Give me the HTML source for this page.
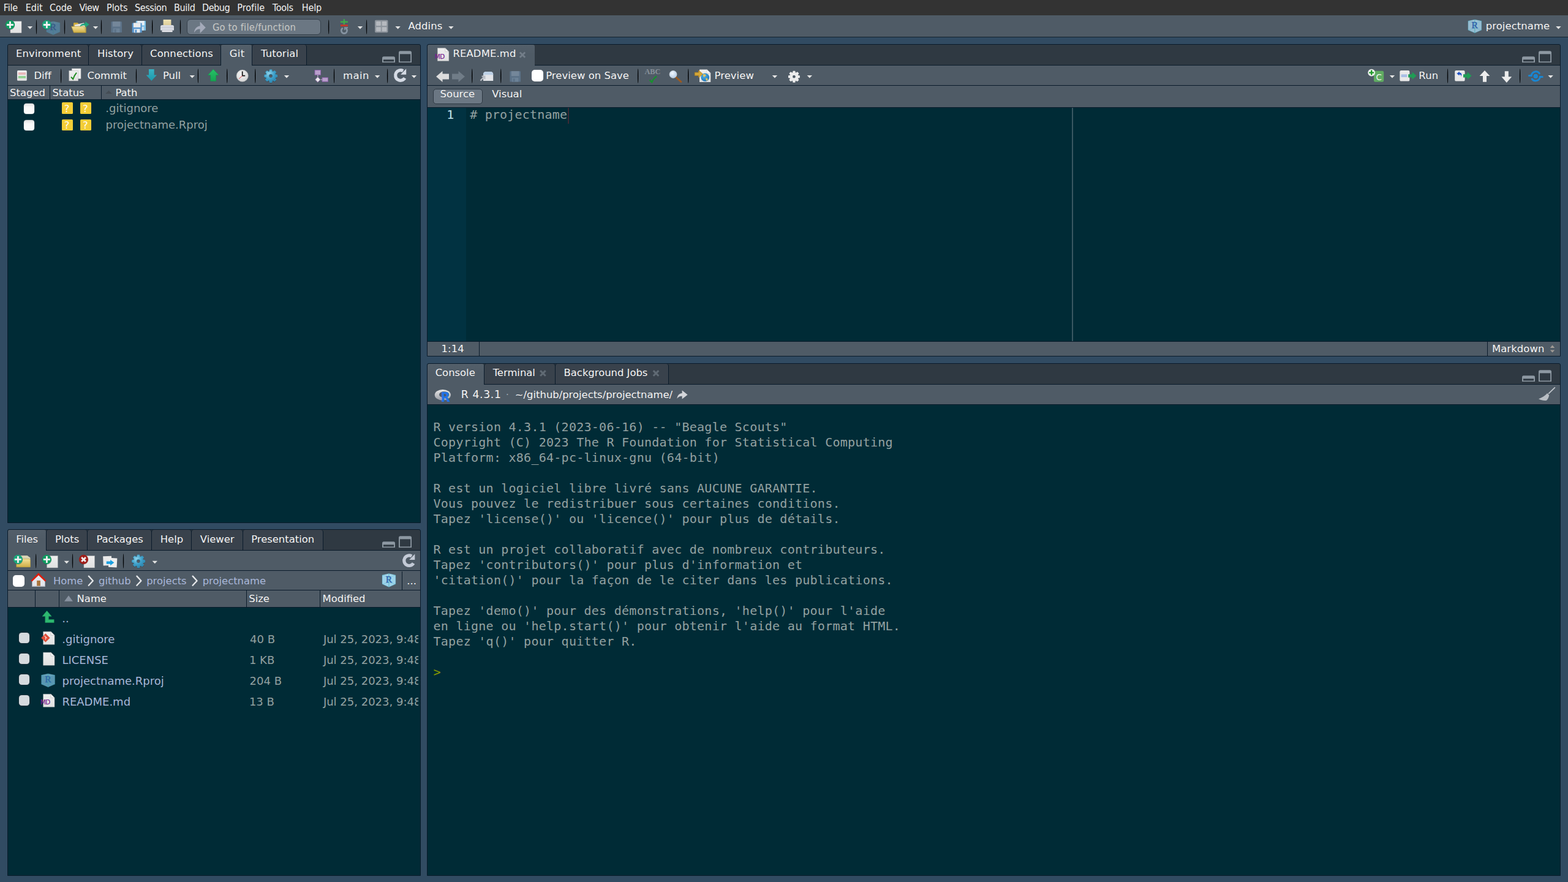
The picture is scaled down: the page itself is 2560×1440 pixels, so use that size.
<!DOCTYPE html>
<html lang="en"><head><meta charset="utf-8"><title>RStudio - projectname</title>
<style>
html,body{margin:0;padding:0;background:#314b62;}
body{width:2560px;height:1440px;overflow:hidden;font-family:"DejaVu Sans","Liberation Sans",sans-serif;}
#app{position:relative;width:2560px;height:1440px;overflow:hidden;background:#314b62;}
#app div,#app span,#app svg{position:absolute;box-sizing:border-box;}
#app svg{overflow:visible;}
.t{white-space:pre;line-height:24px;height:24px;}
.sh{text-shadow:0 1px 0 rgba(0,0,0,.22);}

</style></head>
<body>
<div id="app">
<div style="left:0px;top:0px;width:2560px;height:25px;background:#333333;"></div>
<span class="t" style="left:5.79px;top:1px;font-size:16px;color:#f2f2f2;font-family:&quot;DejaVu Sans Condensed&quot;,&quot;DejaVu Sans&quot;,sans-serif;font-stretch:condensed;letter-spacing:-0.190px;">File</span>
<span class="t" style="left:41.79px;top:1px;font-size:16px;color:#f2f2f2;font-family:&quot;DejaVu Sans Condensed&quot;,&quot;DejaVu Sans&quot;,sans-serif;font-stretch:condensed;letter-spacing:-0.011px;">Edit</span>
<span class="t" style="left:81.00px;top:1px;font-size:16px;color:#f2f2f2;font-family:&quot;DejaVu Sans Condensed&quot;,&quot;DejaVu Sans&quot;,sans-serif;font-stretch:condensed;letter-spacing:-0.063px;">Code</span>
<span class="t" style="left:129.49px;top:1px;font-size:16px;color:#f2f2f2;font-family:&quot;DejaVu Sans Condensed&quot;,&quot;DejaVu Sans&quot;,sans-serif;font-stretch:condensed;letter-spacing:-0.491px;">View</span>
<span class="t" style="left:173.99px;top:1px;font-size:16px;color:#f2f2f2;font-family:&quot;DejaVu Sans Condensed&quot;,&quot;DejaVu Sans&quot;,sans-serif;font-stretch:condensed;letter-spacing:-0.031px;">Plots</span>
<span class="t" style="left:220.05px;top:1px;font-size:16px;color:#f2f2f2;font-family:&quot;DejaVu Sans Condensed&quot;,&quot;DejaVu Sans&quot;,sans-serif;font-stretch:condensed;letter-spacing:-0.394px;">Session</span>
<span class="t" style="left:283.99px;top:1px;font-size:16px;color:#f2f2f2;font-family:&quot;DejaVu Sans Condensed&quot;,&quot;DejaVu Sans&quot;,sans-serif;font-stretch:condensed;letter-spacing:-0.307px;">Build</span>
<span class="t" style="left:329.99px;top:1px;font-size:16px;color:#f2f2f2;font-family:&quot;DejaVu Sans Condensed&quot;,&quot;DejaVu Sans&quot;,sans-serif;font-stretch:condensed;letter-spacing:-0.410px;">Debug</span>
<span class="t" style="left:387.19px;top:1px;font-size:16px;color:#f2f2f2;font-family:&quot;DejaVu Sans Condensed&quot;,&quot;DejaVu Sans&quot;,sans-serif;font-stretch:condensed;letter-spacing:0.042px;">Profile</span>
<span class="t" style="left:444.84px;top:1px;font-size:16px;color:#f2f2f2;font-family:&quot;DejaVu Sans Condensed&quot;,&quot;DejaVu Sans&quot;,sans-serif;font-stretch:condensed;letter-spacing:-0.261px;">Tools</span>
<span class="t" style="left:492.79px;top:1px;font-size:16px;color:#f2f2f2;font-family:&quot;DejaVu Sans Condensed&quot;,&quot;DejaVu Sans&quot;,sans-serif;font-stretch:condensed;letter-spacing:-0.147px;">Help</span>
<div style="left:0px;top:25px;width:2560px;height:36px;background:#4f5b66;border-bottom:1px solid #14222f;"></div>
<div style="left:305px;top:31px;width:219px;height:26px;background:#6b7783;border:1px solid #36414c;border-radius:6px;"></div>
<span class="t" style="left:346.88px;top:33px;font-size:16.4px;color:#c8c9c6;font-family:&quot;DejaVu Sans Condensed&quot;,&quot;DejaVu Sans&quot;,sans-serif;font-stretch:condensed;letter-spacing:0.202px;">Go to file/function</span>
<span class="t sh" style="left:666.47px;top:31px;font-size:16.4px;color:#f6f6f6;letter-spacing:0.119px;">Addins</span>
<span class="t sh" style="left:2425.71px;top:31px;font-size:16.4px;color:#f6f6f6;letter-spacing:0.097px;">projectname</span>
<div style="left:12px;top:72px;width:675px;height:782px;background:#002b36;border:1px solid #0a1b2b;border-radius:3px 3px 0 0;"></div>
<div style="left:13px;top:73px;width:673px;height:34px;background:#2f3942;border-radius:2px 2px 0 0;border-bottom:1px solid #0a1b2b;"></div>
<div style="left:13px;top:73px;width:132px;height:34px;background:#39424c;border-right:1px solid #0a1b2b;border-bottom:1px solid #0a1b2b;border-radius:2px 4px 0 0;"></div>
<div style="left:144px;top:73px;width:88px;height:34px;background:#39424c;border-left:1px solid #0a1b2b;border-right:1px solid #0a1b2b;border-bottom:1px solid #0a1b2b;border-radius:4px 4px 0 0;"></div>
<div style="left:231px;top:73px;width:130px;height:34px;background:#39424c;border-left:1px solid #0a1b2b;border-right:1px solid #0a1b2b;border-bottom:1px solid #0a1b2b;border-radius:4px 4px 0 0;"></div>
<div style="left:361px;top:73px;width:50px;height:34px;background:linear-gradient(#535f6a,#4f5b66 45%);border-radius:3px 3px 0 0;"></div>
<div style="left:411px;top:73px;width:90px;height:34px;background:#39424c;border-left:1px solid #0a1b2b;border-right:1px solid #0a1b2b;border-bottom:1px solid #0a1b2b;border-radius:4px 4px 0 0;"></div>
<span class="t sh" style="left:25.99px;top:76px;font-size:16.4px;color:#f6f6f6;letter-spacing:0.152px;">Environment</span>
<span class="t sh" style="left:158.99px;top:76px;font-size:16.4px;color:#f6f6f6;letter-spacing:0.092px;">History</span>
<span class="t sh" style="left:245.08px;top:76px;font-size:16.4px;color:#f6f6f6;letter-spacing:0.138px;">Connections</span>
<span class="t sh" style="left:374.68px;top:76px;font-size:16.4px;color:#f6f6f6;letter-spacing:0.409px;">Git</span>
<span class="t sh" style="left:426.05px;top:76px;font-size:16.4px;color:#f6f6f6;letter-spacing:0.101px;">Tutorial</span>
<div style="left:13px;top:107px;width:673px;height:33px;background:#4f5b66;border-bottom:1px solid #0a1b2b;"></div>
<div style="left:13px;top:140px;width:673px;height:23px;background:#4f5b66;border-bottom:1px solid #0a1b2b;"></div>
<div style="left:81px;top:140px;width:1px;height:22px;background:#0a1b2b;"></div>
<div style="left:165px;top:140px;width:1px;height:22px;background:#0a1b2b;"></div>
<span class="t sh" style="left:16.12px;top:140px;font-size:16.4px;color:#f6f6f6;">Staged</span>
<span class="t sh" style="left:85.42px;top:140px;font-size:16.4px;color:#f6f6f6;">Status</span>
<span class="t sh" style="left:188.39px;top:140px;font-size:16.4px;color:#f6f6f6;">Path</span>
<span class="t sh" style="left:55.39px;top:112px;font-size:16.4px;color:#f6f6f6;letter-spacing:-0.078px;">Diff</span>
<span class="t sh" style="left:142.38px;top:112px;font-size:16.4px;color:#f6f6f6;letter-spacing:0.058px;">Commit</span>
<span class="t sh" style="left:265.99px;top:112px;font-size:16.4px;color:#f6f6f6;">Pull</span>
<span class="t sh" style="left:559.91px;top:112px;font-size:16.4px;color:#f6f6f6;letter-spacing:0.536px;">main</span>
<div style="left:39px;top:169.2px;width:17px;height:16.7px;background:linear-gradient(#e0e0e0,#f8f8f8 35%,#fcfcfc);border-radius:4px;box-shadow:0 0 0 .5px rgba(150,160,170,.5);"></div>
<div style="left:100.5px;top:167.39999999999998px;width:18.1px;height:18.2px;background:#f4cd36;border-radius:1.6px;"></div>
<span class="t" style="left:104.82px;top:166px;font-size:16.4px;color:#fffdf2;">?</span>
<div style="left:130.6px;top:167.39999999999998px;width:18.1px;height:18.2px;background:#f4cd36;border-radius:1.6px;"></div>
<span class="t" style="left:134.92px;top:166px;font-size:16.4px;color:#fffdf2;">?</span>
<span class="t" style="left:172.28px;top:165px;font-size:18px;color:#93a1a1;">.gitignore</span>
<div style="left:39px;top:196.29999999999998px;width:17px;height:16.7px;background:linear-gradient(#e0e0e0,#f8f8f8 35%,#fcfcfc);border-radius:4px;box-shadow:0 0 0 .5px rgba(150,160,170,.5);"></div>
<div style="left:100.5px;top:194.49999999999997px;width:18.1px;height:18.2px;background:#f4cd36;border-radius:1.6px;"></div>
<span class="t" style="left:104.82px;top:193px;font-size:16.4px;color:#fffdf2;">?</span>
<div style="left:130.6px;top:194.49999999999997px;width:18.1px;height:18.2px;background:#f4cd36;border-radius:1.6px;"></div>
<span class="t" style="left:134.92px;top:193px;font-size:16.4px;color:#fffdf2;">?</span>
<span class="t" style="left:172.57px;top:192px;font-size:18px;color:#93a1a1;">projectname.Rproj</span>
<div style="left:697px;top:72px;width:1851px;height:510px;background:#002b36;border:1px solid #0a1b2b;border-radius:3px 3px 0 0;"></div>
<div style="left:698px;top:73px;width:1849px;height:34px;background:#2f3942;border-radius:2px 2px 0 0;border-bottom:1px solid #0a1b2b;"></div>
<div style="left:698px;top:73px;width:175px;height:34px;background:linear-gradient(#535f6a,#4f5b66 45%);border-radius:3px 3px 0 0;"></div>
<span class="t sh" style="left:739.39px;top:76px;font-size:16.4px;color:#f6f6f6;letter-spacing:0.173px;">README.md</span>
<div style="left:698px;top:107px;width:1849px;height:33px;background:#4f5b66;border-bottom:1px solid #0a1b2b;"></div>
<div style="left:698px;top:140px;width:1849px;height:36px;background:#4f5b66;border-bottom:1px solid #0a1b2b;"></div>
<div style="left:707px;top:145px;width:81px;height:25px;background:#6b7783;border:1px solid #2d3843;border-radius:5px;"></div>
<span class="t sh" style="left:718.62px;top:142px;font-size:16.4px;color:#f6f6f6;letter-spacing:0.053px;">Source</span>
<span class="t sh" style="left:803.27px;top:142px;font-size:16.4px;color:#f6f6f6;">Visual</span>
<div style="left:698px;top:176px;width:63px;height:381px;background:#013241;"></div>
<div style="left:1750px;top:176px;width:2px;height:381px;background:#3a5862;"></div>
<span class="t" style="left:729.30px;top:175px;font-size:20px;color:#c3e4ec;font-family:&quot;DejaVu Sans Mono&quot;,&quot;Liberation Mono&quot;,monospace;">1</span>
<span class="t" style="left:767.18px;top:175px;font-size:20px;color:#93a1a1;font-family:&quot;DejaVu Sans Mono&quot;,&quot;Liberation Mono&quot;,monospace;letter-spacing:0.189px;"># projectname</span>
<div style="left:927px;top:176px;width:2px;height:26px;background:#3d2a35;"></div>
<span class="t sh" style="left:891.19px;top:112px;font-size:16.4px;color:#f6f6f6;letter-spacing:0.063px;">Preview on Save</span>
<span class="t sh" style="left:1166.59px;top:112px;font-size:16.4px;color:#f6f6f6;letter-spacing:0.069px;">Preview</span>
<span class="t sh" style="left:2316.29px;top:112px;font-size:16.4px;color:#f6f6f6;letter-spacing:0.210px;">Run</span>
<div style="left:868.3px;top:114.3px;width:18.4px;height:18.4px;background:#ffffff;border-radius:5px;box-shadow:0 0 0 .7px rgba(90,100,110,.7);"></div>
<div style="left:698px;top:557px;width:1849px;height:1px;background:#0a1b2b;"></div>
<div style="left:698px;top:558px;width:1849px;height:23px;background:#4f5b66;"></div>
<div style="left:782px;top:558px;width:1px;height:23px;background:#0a1b2b;"></div>
<div style="left:2428px;top:558px;width:1px;height:23px;background:#0a1b2b;"></div>
<span class="t sh" style="left:720.60px;top:558px;font-size:16.4px;color:#f6f6f6;letter-spacing:0.098px;">1:14</span>
<span class="t sh" style="left:2435.99px;top:558px;font-size:16.4px;color:#f6f6f6;letter-spacing:0.102px;">Markdown</span>
<div style="left:697px;top:593px;width:1851px;height:837px;background:#002b36;border:1px solid #0a1b2b;border-radius:3px 3px 0 0;"></div>
<div style="left:698px;top:594px;width:1849px;height:34px;background:#2f3942;border-radius:2px 2px 0 0;border-bottom:1px solid #0a1b2b;"></div>
<div style="left:698px;top:594px;width:92px;height:34px;background:linear-gradient(#535f6a,#4f5b66 45%);border-radius:3px 3px 0 0;"></div>
<div style="left:790px;top:594px;width:117px;height:34px;background:#39424c;border-left:1px solid #0a1b2b;border-right:1px solid #0a1b2b;border-bottom:1px solid #0a1b2b;border-radius:4px 4px 0 0;"></div>
<div style="left:906px;top:594px;width:186px;height:34px;background:#39424c;border-left:1px solid #0a1b2b;border-right:1px solid #0a1b2b;border-bottom:1px solid #0a1b2b;border-radius:4px 4px 0 0;"></div>
<span class="t sh" style="left:710.68px;top:597px;font-size:16.4px;color:#f6f6f6;">Console</span>
<span class="t sh" style="left:804.65px;top:597px;font-size:16.4px;color:#f6f6f6;">Terminal</span>
<span class="t sh" style="left:920.59px;top:597px;font-size:16.4px;color:#f6f6f6;">Background Jobs</span>
<div style="left:698px;top:628px;width:1849px;height:33px;background:#4f5b66;border-bottom:1px solid #0a1b2b;"></div>
<span class="t sh" style="left:752.81px;top:632px;font-size:17.2px;color:#f6f6f6;letter-spacing:0.649px;">R 4.3.1</span>
<span class="t" style="left:825.85px;top:633px;font-size:16.4px;color:#9aa3aa;">·</span>
<span class="t sh" style="left:840.86px;top:633px;font-size:16.4px;color:#f6f6f6;">~/github/projects/projectname/</span>
<span class="t" style="left:707.50px;top:685px;font-size:20px;color:#93a1a1;font-family:&quot;DejaVu Sans Mono&quot;,&quot;Liberation Mono&quot;,monospace;letter-spacing:0.260px;">R version 4.3.1 (2023-06-16) -- &quot;Beagle Scouts&quot;</span>
<span class="t" style="left:707.50px;top:710px;font-size:20px;color:#93a1a1;font-family:&quot;DejaVu Sans Mono&quot;,&quot;Liberation Mono&quot;,monospace;letter-spacing:0.260px;">Copyright (C) 2023 The R Foundation for Statistical Computing</span>
<span class="t" style="left:707.50px;top:735px;font-size:20px;color:#93a1a1;font-family:&quot;DejaVu Sans Mono&quot;,&quot;Liberation Mono&quot;,monospace;letter-spacing:0.260px;">Platform: x86_64-pc-linux-gnu (64-bit)</span>
<span class="t" style="left:707.50px;top:785px;font-size:20px;color:#93a1a1;font-family:&quot;DejaVu Sans Mono&quot;,&quot;Liberation Mono&quot;,monospace;letter-spacing:0.260px;">R est un logiciel libre livré sans AUCUNE GARANTIE.</span>
<span class="t" style="left:707.50px;top:810px;font-size:20px;color:#93a1a1;font-family:&quot;DejaVu Sans Mono&quot;,&quot;Liberation Mono&quot;,monospace;letter-spacing:0.260px;">Vous pouvez le redistribuer sous certaines conditions.</span>
<span class="t" style="left:707.50px;top:835px;font-size:20px;color:#93a1a1;font-family:&quot;DejaVu Sans Mono&quot;,&quot;Liberation Mono&quot;,monospace;letter-spacing:0.260px;">Tapez &#x27;license()&#x27; ou &#x27;licence()&#x27; pour plus de détails.</span>
<span class="t" style="left:707.50px;top:885px;font-size:20px;color:#93a1a1;font-family:&quot;DejaVu Sans Mono&quot;,&quot;Liberation Mono&quot;,monospace;letter-spacing:0.260px;">R est un projet collaboratif avec de nombreux contributeurs.</span>
<span class="t" style="left:707.50px;top:910px;font-size:20px;color:#93a1a1;font-family:&quot;DejaVu Sans Mono&quot;,&quot;Liberation Mono&quot;,monospace;letter-spacing:0.260px;">Tapez &#x27;contributors()&#x27; pour plus d&#x27;information et</span>
<span class="t" style="left:707.50px;top:935px;font-size:20px;color:#93a1a1;font-family:&quot;DejaVu Sans Mono&quot;,&quot;Liberation Mono&quot;,monospace;letter-spacing:0.260px;">&#x27;citation()&#x27; pour la façon de le citer dans les publications.</span>
<span class="t" style="left:707.50px;top:985px;font-size:20px;color:#93a1a1;font-family:&quot;DejaVu Sans Mono&quot;,&quot;Liberation Mono&quot;,monospace;letter-spacing:0.260px;">Tapez &#x27;demo()&#x27; pour des démonstrations, &#x27;help()&#x27; pour l&#x27;aide</span>
<span class="t" style="left:707.50px;top:1010px;font-size:20px;color:#93a1a1;font-family:&quot;DejaVu Sans Mono&quot;,&quot;Liberation Mono&quot;,monospace;letter-spacing:0.260px;">en ligne ou &#x27;help.start()&#x27; pour obtenir l&#x27;aide au format HTML.</span>
<span class="t" style="left:707.50px;top:1035px;font-size:20px;color:#93a1a1;font-family:&quot;DejaVu Sans Mono&quot;,&quot;Liberation Mono&quot;,monospace;letter-spacing:0.260px;">Tapez &#x27;q()&#x27; pour quitter R.</span>
<span class="t" style="left:707.50px;top:1085px;font-size:20px;color:#859900;font-family:&quot;DejaVu Sans Mono&quot;,&quot;Liberation Mono&quot;,monospace;">&gt;</span>
<div style="left:12px;top:864px;width:675px;height:566px;background:#002b36;border:1px solid #0a1b2b;border-radius:3px 3px 0 0;"></div>
<div style="left:13px;top:865px;width:673px;height:34px;background:#2f3942;border-radius:2px 2px 0 0;border-bottom:1px solid #0a1b2b;"></div>
<div style="left:13px;top:865px;width:62px;height:34px;background:linear-gradient(#535f6a,#4f5b66 45%);border-radius:3px 3px 0 0;"></div>
<div style="left:75px;top:865px;width:68px;height:34px;background:#39424c;border-left:1px solid #0a1b2b;border-right:1px solid #0a1b2b;border-bottom:1px solid #0a1b2b;border-radius:4px 4px 0 0;"></div>
<div style="left:142px;top:865px;width:106px;height:34px;background:#39424c;border-left:1px solid #0a1b2b;border-right:1px solid #0a1b2b;border-bottom:1px solid #0a1b2b;border-radius:4px 4px 0 0;"></div>
<div style="left:247px;top:865px;width:66px;height:34px;background:#39424c;border-left:1px solid #0a1b2b;border-right:1px solid #0a1b2b;border-bottom:1px solid #0a1b2b;border-radius:4px 4px 0 0;"></div>
<div style="left:312px;top:865px;width:85px;height:34px;background:#39424c;border-left:1px solid #0a1b2b;border-right:1px solid #0a1b2b;border-bottom:1px solid #0a1b2b;border-radius:4px 4px 0 0;"></div>
<div style="left:396px;top:865px;width:132px;height:34px;background:#39424c;border-left:1px solid #0a1b2b;border-right:1px solid #0a1b2b;border-bottom:1px solid #0a1b2b;border-radius:4px 4px 0 0;"></div>
<span class="t sh" style="left:26.19px;top:869px;font-size:16.4px;color:#f6f6f6;">Files</span>
<span class="t sh" style="left:89.89px;top:869px;font-size:16.4px;color:#f6f6f6;">Plots</span>
<span class="t sh" style="left:157.39px;top:869px;font-size:16.4px;color:#f6f6f6;">Packages</span>
<span class="t sh" style="left:261.79px;top:869px;font-size:16.4px;color:#f6f6f6;">Help</span>
<span class="t sh" style="left:326.87px;top:869px;font-size:16.4px;color:#f6f6f6;">Viewer</span>
<span class="t sh" style="left:410.19px;top:869px;font-size:16.4px;color:#f6f6f6;">Presentation</span>
<div style="left:13px;top:899px;width:673px;height:33px;background:#4f5b66;border-bottom:1px solid #0a1b2b;"></div>
<div style="left:13px;top:932px;width:673px;height:32px;background:#4f5b66;border-bottom:1px solid #0a1b2b;"></div>
<div style="left:13px;top:964px;width:673px;height:28px;background:#4f5b66;border-bottom:1px solid #0a1b2b;"></div>
<div style="left:57px;top:964px;width:1px;height:27px;background:#0a1b2b;"></div>
<div style="left:96px;top:964px;width:1px;height:27px;background:#0a1b2b;"></div>
<div style="left:402px;top:964px;width:1px;height:27px;background:#0a1b2b;"></div>
<div style="left:522px;top:964px;width:1px;height:27px;background:#0a1b2b;"></div>
<div style="left:656px;top:933px;width:1px;height:30px;background:#0a1b2b;"></div>
<span class="t sh" style="left:125.59px;top:966px;font-size:16.4px;color:#f6f6f6;">Name</span>
<span class="t sh" style="left:406.32px;top:966px;font-size:16.4px;color:#f6f6f6;">Size</span>
<span class="t sh" style="left:526.59px;top:966px;font-size:16.4px;color:#f6f6f6;">Modified</span>
<span class="t" style="left:86.89px;top:937px;font-size:16.4px;color:#a9b7d9;">Home</span>
<span class="t" style="left:161.10px;top:937px;font-size:16.4px;color:#a9b7d9;">github</span>
<span class="t" style="left:239.21px;top:937px;font-size:16.4px;color:#a9b7d9;">projects</span>
<span class="t" style="left:330.71px;top:937px;font-size:16.4px;color:#a9b7d9;">projectname</span>
<span class="t" style="left:664.25px;top:937px;font-size:16.4px;color:#f6f6f6;">...</span>
<div style="left:21.4px;top:939.3px;width:18.3px;height:18.3px;background:#ffffff;border-radius:5px;box-shadow:0 0 0 .7px rgba(90,100,110,.7);"></div>
<span class="t" style="left:101.28px;top:998px;font-size:18px;color:#a9b7d9;">..</span>
<div style="left:31px;top:1033px;width:17px;height:17px;background:#d5dade;border-radius:4.5px;box-shadow:0 0 0 .7px rgba(40,50,60,.8);"></div>
<span class="t" style="left:101.28px;top:1032px;font-size:18px;color:#a9b7d9;">.gitignore</span>
<span class="t" style="left:408.02px;top:1032px;font-size:18px;color:#93a1a1;">40 B</span>
<div style="left:523px;top:1028px;width:160px;height:30px;overflow:hidden;"><span class="t" style="left:4.9px;top:4px;font-size:18px;color:#93a1a1;">Jul 25, 2023, 9:48</span></div>
<div style="left:31px;top:1067px;width:17px;height:17px;background:#d5dade;border-radius:4.5px;box-shadow:0 0 0 .7px rgba(40,50,60,.8);"></div>
<span class="t" style="left:101.43px;top:1066px;font-size:18px;color:#a9b7d9;">LICENSE</span>
<span class="t" style="left:406.92px;top:1066px;font-size:18px;color:#93a1a1;">1 KB</span>
<div style="left:523px;top:1062px;width:160px;height:30px;overflow:hidden;"><span class="t" style="left:4.9px;top:4px;font-size:18px;color:#93a1a1;">Jul 25, 2023, 9:48</span></div>
<div style="left:31px;top:1101px;width:17px;height:17px;background:#d5dade;border-radius:4.5px;box-shadow:0 0 0 .7px rgba(40,50,60,.8);"></div>
<span class="t" style="left:101.57px;top:1100px;font-size:18px;color:#a9b7d9;">projectname.Rproj</span>
<span class="t" style="left:407.58px;top:1100px;font-size:18px;color:#93a1a1;">204 B</span>
<div style="left:523px;top:1096px;width:160px;height:30px;overflow:hidden;"><span class="t" style="left:4.9px;top:4px;font-size:18px;color:#93a1a1;">Jul 25, 2023, 9:48</span></div>
<div style="left:31px;top:1135px;width:17px;height:17px;background:#d5dade;border-radius:4.5px;box-shadow:0 0 0 .7px rgba(40,50,60,.8);"></div>
<span class="t" style="left:101.43px;top:1134px;font-size:18px;color:#a9b7d9;">README.md</span>
<span class="t" style="left:406.92px;top:1134px;font-size:18px;color:#93a1a1;">13 B</span>
<div style="left:523px;top:1130px;width:160px;height:30px;overflow:hidden;"><span class="t" style="left:4.9px;top:4px;font-size:18px;color:#93a1a1;">Jul 25, 2023, 9:48</span></div>
<svg id="ov" style="left:0;top:0" width="2560" height="1440" viewBox="0 0 2560 1440"><defs>
<linearGradient id="gDoc" x1="0" y1="0" x2="0" y2="1"><stop offset="0" stop-color="#efefef"/><stop offset="1" stop-color="#e1e1e1"/></linearGradient>
<linearGradient id="gFold" x1="0" y1="0" x2="0" y2="1"><stop offset="0" stop-color="#f3e19a"/><stop offset="1" stop-color="#cfae45"/></linearGradient>
<linearGradient id="gPaper" x1="0" y1="0" x2="0" y2="1"><stop offset="0" stop-color="#efe4b6"/><stop offset="1" stop-color="#d9c993"/></linearGradient>
<linearGradient id="gPull" x1="0" y1="0" x2="0" y2="1"><stop offset="0" stop-color="#37b3c4"/><stop offset="1" stop-color="#1d97ab"/></linearGradient>
<linearGradient id="gPush" x1="0" y1="0" x2="0" y2="1"><stop offset="0" stop-color="#27c267"/><stop offset="1" stop-color="#16a352"/></linearGradient>
<radialGradient id="gGear" cx="0.35" cy="0.3" r="0.8"><stop offset="0" stop-color="#8fd3ea"/><stop offset="0.55" stop-color="#3d9fc9"/><stop offset="1" stop-color="#2a7fa8"/></radialGradient>
<radialGradient id="gClock" cx="0.4" cy="0.35" r="0.8"><stop offset="0" stop-color="#f4f4f4"/><stop offset="1" stop-color="#cfcfcf"/></radialGradient>
<radialGradient id="gLens" cx="0.4" cy="0.35" r="0.8"><stop offset="0" stop-color="#f4f9ff"/><stop offset="1" stop-color="#a9c4e4"/></radialGradient>
<radialGradient id="gGlobe" cx="0.4" cy="0.35" r="0.8"><stop offset="0" stop-color="#4fb1e8"/><stop offset="1" stop-color="#1769ad"/></radialGradient>
<linearGradient id="gRlogo" x1="0" y1="0" x2="0" y2="1"><stop offset="0" stop-color="#e9e9e9"/><stop offset="1" stop-color="#9a9ea6"/></linearGradient>
</defs>
<ellipse cx="60.800000000000004" cy="44.0" rx="0.6" ry="10.0" fill="rgba(160,175,190,.28)"/><ellipse cx="59.6" cy="44.0" rx="0.85" ry="12.0" fill="#06090c"/>
<ellipse cx="106.8" cy="44.0" rx="0.6" ry="10.0" fill="rgba(160,175,190,.28)"/><ellipse cx="105.6" cy="44.0" rx="0.85" ry="12.0" fill="#06090c"/>
<ellipse cx="166.79999999999998" cy="44.0" rx="0.6" ry="10.0" fill="rgba(160,175,190,.28)"/><ellipse cx="165.6" cy="44.0" rx="0.85" ry="12.0" fill="#06090c"/>
<ellipse cx="250.0" cy="44.0" rx="0.6" ry="10.0" fill="rgba(160,175,190,.28)"/><ellipse cx="248.8" cy="44.0" rx="0.85" ry="12.0" fill="#06090c"/>
<ellipse cx="295.8" cy="44.0" rx="0.6" ry="10.0" fill="rgba(160,175,190,.28)"/><ellipse cx="294.6" cy="44.0" rx="0.85" ry="12.0" fill="#06090c"/>
<ellipse cx="537.9000000000001" cy="44.0" rx="0.6" ry="10.0" fill="rgba(160,175,190,.28)"/><ellipse cx="536.7" cy="44.0" rx="0.85" ry="12.0" fill="#06090c"/>
<ellipse cx="599.8000000000001" cy="44.0" rx="0.6" ry="10.0" fill="rgba(160,175,190,.28)"/><ellipse cx="598.6" cy="44.0" rx="0.85" ry="12.0" fill="#06090c"/>
<rect x="17" y="34.9" width="18" height="18.8" fill="url(#gDoc)" stroke="#c4c4c4" stroke-width=".5"/>
<circle cx="16.8" cy="41.1" r="7.6" fill="rgba(0,0,0,.22)"/><circle cx="16.5" cy="40.5" r="7.6" fill="#0f9b60"/><path d="M11.0 39.1h4.1v-4.1h2.8v4.1h4.1v2.8h-4.1v4.1h-2.8v-4.1h-4.1z" fill="#f1eff0"/>
<path d="M44.8 43h8.4l-4.2 4.4z" fill="#e4e4e4"/>
<g transform="translate(75.9 35) scale(1.0)" opacity="0.5"><path d="M10.95 0L21.9 2.3V17L10.95 21.8L0 17V2.3Z" fill="#5aa0cc" stroke="rgba(70,170,190,.55)" stroke-width=".6" stroke-linejoin="round"/><path d="M10.95 0L21.9 2.3L10.95 5.2L0 2.3Z" fill="rgba(255,255,255,.10)"/><path d="M10.95 0V21.8" fill="none" stroke="rgba(50,160,170,.75)" stroke-width=".9"/><path d="M0 17L10.95 14.1L21.9 17M0 2.3L10.95 5.2L21.9 2.3" fill="none" stroke="rgba(60,170,190,.45)" stroke-width=".7"/><text x="10.9" y="13.9" text-anchor="middle" font-family="Liberation Serif,DejaVu Serif,serif" font-size="15.6" fill="#1d55a6" stroke="#1d55a6" stroke-width=".3">R</text></g>
<circle cx="76.7" cy="41.1" r="7.6" fill="rgba(0,0,0,.22)"/><circle cx="76.4" cy="40.5" r="7.6" fill="#1aa67a"/><path d="M70.9 39.1h4.1v-4.1h2.8v4.1h4.1v2.8h-4.1v4.1h-2.8v-4.1h-4.1z" fill="#f1eff0"/>
<path d="M120 38.2Q120 37 121.2 37H126.6L128.6 39H139.5Q140.6 39 140.6 40.2V52.4H120Z" fill="#c9a83c"/><path d="M121.8 40.5L137.2 37.2L139.6 51H122.5Z" fill="#e6e6e6"/><path d="M116.6 43.2H136.8L140.4 53.2H120.4Z" fill="url(#gFold)" stroke="#b2932f" stroke-width=".7" stroke-linejoin="round"/><path d="M130.5 43.2C131.5 39.6 135 38.3 139.2 38.6V35.3L145.8 40L139.2 44.8V41.6C136 41.3 133.4 41.6 130.5 43.2Z" fill="#1fa57c"/>
<path d="M151.8 43h8.4l-4.2 4.4z" fill="#e4e4e4"/>
<g transform="translate(181.4 35.2)"><path d="M0 1Q0 0 1 0H16.6Q17.6 0 17.6 1V17.9H0Z" fill="#5c7288"/><rect x="2.4640000000000004" y="0" width="12.672" height="8.234" fill="#74879a"/><rect x="3.5200000000000005" y="11.097999999999999" width="10.56" height="6.802" fill="#6c8297"/><rect x="5.28" y="12.529999999999998" width="2.9920000000000004" height="5.369999999999999" fill="#5c7288"/></g>
<g transform="translate(221.8 34.1)"><path d="M0 1Q0 0 1 0H15.2Q16.2 0 16.2 1V15.6H0Z" fill="#7cc0e6"/><rect x="2.2680000000000002" y="0" width="11.664" height="7.176" fill="#e9f0f6"/><rect x="3.24" y="9.672" width="9.719999999999999" height="5.928" fill="#d8e4ee"/><rect x="4.859999999999999" y="10.92" width="2.754" height="4.68" fill="#5a9fd0"/></g>
<g transform="translate(215.7 37.4)"><path d="M0 1Q0 0 1 0H15Q16 0 16 1V15.9H0Z" fill="#5b98cf"/><rect x="2.24" y="0" width="11.52" height="7.314" fill="#ececec"/><rect x="3.2" y="9.858" width="9.6" height="6.042" fill="#e4e9ee"/><rect x="4.8" y="11.129999999999999" width="2.72" height="4.77" fill="#4f8fca"/></g>
<rect x="266.6" y="32" width="12.8" height="10.6" fill="url(#gPaper)"/><path d="M262 43.6Q262 41 264.6 41H281.4Q284 41 284 43.6V49.4H262Z" fill="#d8dbe2"/><rect x="262" y="44.3" width="22" height="1" fill="#bfc3cc"/><rect x="264.4" y="49.4" width="17.2" height="2.9" rx=".6" fill="#e9eaee"/>
<path d="M316.8 53.6C317.6 46.6 321 43 326.6 42.4V35.6L335.8 45L326.6 54.2V47.4C322.4 47.2 319.4 49 316.8 53.6Z" fill="#a4aab9"/>
<path d="M555.9 34.4h4.65v-3.1h2.5v3.1h4.95v2.7h-4.95v2.9h-2.5v-2.9h-4.65z" fill="#3fa84a"/><rect x="555.9" y="40.1" width="12.1" height="3" fill="#c0392b"/><path d="M564.11 45.65A4.7 4.7 0 1 1 559.69 45.65" fill="none" stroke="#8593a1" stroke-width="2.8"/><path d="M561.9 44.2H568V45.9H563.6V48.9H561.9Z" fill="#8593a1"/>
<path d="M583.8 43h8.4l-4.2 4.4z" fill="#e4e4e4"/>
<rect x="612" y="32.8" width="21.4" height="20.4" rx="1.6" fill="#8e959d"/><rect x="614.1" y="35" width="7.6" height="7" rx="1" fill="#b5b9bf"/><rect x="614.1" y="44.2" width="7.6" height="7" rx="1" fill="#b5b9bf"/><rect x="623.7" y="35" width="7.6" height="7" rx="1" fill="#b5b9bf"/><rect x="623.7" y="44.2" width="7.6" height="7" rx="1" fill="#b5b9bf"/>
<path d="M645.4 43h8.4l-4.2 4.4z" fill="#e4e4e4"/>
<path d="M732.2 43h8.4l-4.2 4.4z" fill="#e4e4e4"/>
<g transform="translate(2396.9 32) scale(1.0)" opacity="1.0"><path d="M10.95 0L21.9 2.3V17L10.95 21.8L0 17V2.3Z" fill="#96bdd2" stroke="rgba(70,170,190,.55)" stroke-width=".6" stroke-linejoin="round"/><path d="M10.95 0L21.9 2.3L10.95 5.2L0 2.3Z" fill="rgba(255,255,255,.10)"/><path d="M10.95 0V21.8" fill="none" stroke="rgba(50,160,170,.75)" stroke-width=".9"/><path d="M0 17L10.95 14.1L21.9 17M0 2.3L10.95 5.2L21.9 2.3" fill="none" stroke="rgba(60,170,190,.45)" stroke-width=".7"/><text x="10.9" y="13.9" text-anchor="middle" font-family="Liberation Serif,DejaVu Serif,serif" font-size="15.6" fill="#2a5ca8" stroke="#2a5ca8" stroke-width=".3">R</text></g>
<path d="M2540.2 43h8.4l-4.2 4.4z" fill="#e4e4e4"/>
<g transform="translate(624 84)"><path d="M0 17.9V10.8Q0 8.3 2.5 8.3H18.5Q21 8.3 21 10.8V17.9Z" fill="#8d98a2"/><rect x="1.9" y="13.3" width="17.2" height="3.2" fill="#2f3942"/><path d="M27 17.9V1.7Q27 -0.8 29.5 -0.8H45.5Q48 -0.8 48 1.7V17.9Z" fill="#8d98a2"/><rect x="28.9" y="4.3" width="17.3" height="12.2" fill="#2f3942"/></g>
<path d="M172.2 152.9L177.5 147.8L182.8 152.9Z" fill="#454d55"/>
<ellipse cx="100.9" cy="124.0" rx="0.6" ry="10.0" fill="rgba(160,175,190,.28)"/><ellipse cx="99.7" cy="124.0" rx="0.85" ry="12.0" fill="#06090c"/>
<ellipse cx="223.79999999999998" cy="124.0" rx="0.6" ry="10.0" fill="rgba(160,175,190,.28)"/><ellipse cx="222.6" cy="124.0" rx="0.85" ry="12.0" fill="#06090c"/>
<ellipse cx="324.7" cy="124.0" rx="0.6" ry="10.0" fill="rgba(160,175,190,.28)"/><ellipse cx="323.5" cy="124.0" rx="0.85" ry="12.0" fill="#06090c"/>
<ellipse cx="372.0" cy="124.0" rx="0.6" ry="10.0" fill="rgba(160,175,190,.28)"/><ellipse cx="370.8" cy="124.0" rx="0.85" ry="12.0" fill="#06090c"/>
<ellipse cx="418.0" cy="124.0" rx="0.6" ry="10.0" fill="rgba(160,175,190,.28)"/><ellipse cx="416.8" cy="124.0" rx="0.85" ry="12.0" fill="#06090c"/>
<ellipse cx="546.8000000000001" cy="124.0" rx="0.6" ry="10.0" fill="rgba(160,175,190,.28)"/><ellipse cx="545.6" cy="124.0" rx="0.85" ry="12.0" fill="#06090c"/>
<ellipse cx="633.9000000000001" cy="124.0" rx="0.6" ry="10.0" fill="rgba(160,175,190,.28)"/><ellipse cx="632.7" cy="124.0" rx="0.85" ry="12.0" fill="#06090c"/>
<path d="M309.6 123h8.4l-4.2 4.4z" fill="#e4e4e4"/>
<path d="M463.8 123h8.4l-4.2 4.4z" fill="#e4e4e4"/>
<path d="M611.9 123h8.4l-4.2 4.4z" fill="#e4e4e4"/>
<path d="M671.8 123h8.4l-4.2 4.4z" fill="#e4e4e4"/>
<rect x="28" y="115" width="15.8" height="16.8" rx="1.6" fill="url(#gDoc)"/><rect x="29.8" y="118.3" width="12.2" height="3.7" fill="#e9b7b9"/><rect x="29.8" y="124.1" width="12.2" height="3.6" fill="#8fd18f"/>
<rect x="117.4" y="112" width="14.6" height="16.4" fill="#efefef" stroke="#c9c9c9" stroke-width=".5"/><rect x="112.8" y="115.4" width="14.8" height="16.6" fill="url(#gDoc)" stroke="#bcbcbc" stroke-width=".5"/><path d="M116 125.6L119.2 129.2C120.8 124.6 122.6 121.4 125 118.6" fill="none" stroke="#1c8a1c" stroke-width="1.9"/>
<path d="M242.95 113V122.5H238.6L247.29999999999998 132L256.0 122.5H251.65V113Z" fill="url(#gPull)" />
<path d="M343.7 132.4V122.7H339.2L348.2 113L357.2 122.7H352.7V132.4Z" fill="url(#gPush)" stroke="#129448" stroke-width=".6"/>
<circle cx="395.7" cy="123.7" r="9.6" fill="url(#gClock)" stroke="#bdbdbd" stroke-width=".5"/><path d="M395.7 116.4V123.7H400.2" fill="none" stroke="#111" stroke-width="1.7"/><path d="M395.7 123.7L390.2 128.6" stroke="#e4474a" stroke-width="1"/>
<path d="M439.88 117.63L440.56 114.62L443.64 114.62L444.32 117.63L445.60 118.17L448.21 116.51L450.39 118.69L448.73 121.30L449.27 122.58L452.28 123.26L452.28 126.34L449.27 127.02L448.73 128.30L450.39 130.91L448.21 133.09L445.60 131.43L444.32 131.97L443.64 134.98L440.56 134.98L439.88 131.97L438.60 131.43L435.99 133.09L433.81 130.91L435.47 128.30L434.93 127.02L431.92 126.34L431.92 123.26L434.93 122.58L435.47 121.30L433.81 118.69L435.99 116.51L438.60 118.17ZM445.40 124.8A3.3 3.3 0 1 0 438.80 124.8A3.3 3.3 0 1 0 445.40 124.8Z" fill="rgba(10,20,30,.35)" fill-rule="evenodd" stroke="rgba(10,20,30,.35)" stroke-width="1.3" stroke-linejoin="round"/>
<path d="M439.88 116.93L440.56 113.92L443.64 113.92L444.32 116.93L445.60 117.47L448.21 115.81L450.39 117.99L448.73 120.60L449.27 121.88L452.28 122.56L452.28 125.64L449.27 126.32L448.73 127.60L450.39 130.21L448.21 132.39L445.60 130.73L444.32 131.27L443.64 134.28L440.56 134.28L439.88 131.27L438.60 130.73L435.99 132.39L433.81 130.21L435.47 127.60L434.93 126.32L431.92 125.64L431.92 122.56L434.93 121.88L435.47 120.60L433.81 117.99L435.99 115.81L438.60 117.47ZM445.40 124.1A3.3 3.3 0 1 0 438.80 124.1A3.3 3.3 0 1 0 445.40 124.1Z" fill="#3a9cc6" stroke="#3a9cc6" stroke-width="1.3" stroke-linejoin="round" fill-rule="evenodd"/><path d="M439.88 116.93L440.56 113.92L443.64 113.92L444.32 116.93L445.60 117.47L448.21 115.81L450.39 117.99L448.73 120.60L449.27 121.88L452.28 122.56L452.28 125.64L449.27 126.32L448.73 127.60L450.39 130.21L448.21 132.39L445.60 130.73L444.32 131.27L443.64 134.28L440.56 134.28L439.88 131.27L438.60 130.73L435.99 132.39L433.81 130.21L435.47 127.60L434.93 126.32L431.92 125.64L431.92 122.56L434.93 121.88L435.47 120.60L433.81 117.99L435.99 115.81L438.60 117.47ZM445.40 124.1A3.3 3.3 0 1 0 438.80 124.1A3.3 3.3 0 1 0 445.40 124.1Z" fill="url(#gGear)" fill-rule="evenodd"/>
<rect x="514" y="114.6" width="9.6" height="7.6" fill="#b9a0cc" stroke="#8f5fae" stroke-width=".9"/><rect x="526" y="126.8" width="9.4" height="6.4" fill="#b9a0cc" stroke="#8f5fae" stroke-width=".9"/><path d="M518.8 122.4V125.4M523.4 130H526" stroke="#c9b6d8" stroke-width="1.2"/><path d="M518.8 125.6L523 130L518.8 134.2L514.6 130Z" fill="#ececec" stroke="#9a6fb5" stroke-width=".8"/>
<path d="M660.94 127.40A8.3 8.3 0 1 1 658.05 115.81" fill="none" stroke="#d5dbe5" stroke-width="5.2"/><path d="M663.20 112.30V121.80H654.00Z" fill="#d5dbe5"/>
<path d="M714.4 78.4H726.8L732.8 84.4V99.4H714.4Z" fill="url(#gDoc)" stroke="#bdbdbd" stroke-width=".4"/><path d="M726.8 78.4V84.4H732.8Z" fill="#f8f8f8" stroke="#b5b5b5" stroke-width=".6" stroke-linejoin="round"/>
<text x="709.8" y="95.60000000000001" font-family="DejaVu Sans,Liberation Sans,sans-serif" font-size="10.4" letter-spacing="-0.6" fill="#7a1f8f" stroke="#7a1f8f" stroke-width=".25">MD</text>
<path d="M848.8 85.39999999999999L857.2 93.8M857.2 85.39999999999999L848.8 93.8" stroke="#737e89" stroke-width="2.8" fill="none"/>
<g transform="translate(2485 84)"><path d="M0 17.9V10.8Q0 8.3 2.5 8.3H18.5Q21 8.3 21 10.8V17.9Z" fill="#8d98a2"/><rect x="1.9" y="13.3" width="17.2" height="3.2" fill="#2f3942"/><path d="M27 17.9V1.7Q27 -0.8 29.5 -0.8H45.5Q48 -0.8 48 1.7V17.9Z" fill="#8d98a2"/><rect x="28.9" y="4.3" width="17.3" height="12.2" fill="#2f3942"/></g>
<ellipse cx="772.0" cy="124.0" rx="0.6" ry="10.0" fill="rgba(160,175,190,.28)"/><ellipse cx="770.8" cy="124.0" rx="0.85" ry="12.0" fill="#06090c"/>
<ellipse cx="819.0" cy="124.0" rx="0.6" ry="10.0" fill="rgba(160,175,190,.28)"/><ellipse cx="817.8" cy="124.0" rx="0.85" ry="12.0" fill="#06090c"/>
<ellipse cx="1042.9" cy="124.0" rx="0.6" ry="10.0" fill="rgba(160,175,190,.28)"/><ellipse cx="1041.7" cy="124.0" rx="0.85" ry="12.0" fill="#06090c"/>
<ellipse cx="1125.0" cy="124.0" rx="0.6" ry="10.0" fill="rgba(160,175,190,.28)"/><ellipse cx="1123.8" cy="124.0" rx="0.85" ry="12.0" fill="#06090c"/>
<ellipse cx="2364.7999999999997" cy="124.0" rx="0.6" ry="10.0" fill="rgba(160,175,190,.28)"/><ellipse cx="2363.6" cy="124.0" rx="0.85" ry="12.0" fill="#06090c"/>
<ellipse cx="2482.8999999999996" cy="124.0" rx="0.6" ry="10.0" fill="rgba(160,175,190,.28)"/><ellipse cx="2481.7" cy="124.0" rx="0.85" ry="12.0" fill="#06090c"/>
<path d="M1260.7 123h8.4l-4.2 4.4z" fill="#e4e4e4"/>
<path d="M1317.6 123h8.4l-4.2 4.4z" fill="#e4e4e4"/>
<path d="M2268.8 123h8.4l-4.2 4.4z" fill="#e4e4e4"/>
<path d="M2527.4 123h8.4l-4.2 4.4z" fill="#e4e4e4"/>
<path d="M733 120.5H722.5V116L712 125.0L722.5 134V129.5H733Z" fill="#dcdcdc"/>
<path d="M738 120.5H748.5V116L759 125.0L748.5 134V129.5H738Z" fill="#707c87"/>
<path d="M789 121.6Q789 117 793.6 117H800.6Q805.2 117 805.2 121.6V132H789Z" fill="#e2e4e8"/><path d="M789 121.6Q789 117 793.6 117H800.6Q805.2 117 805.2 121.6V122.2H789Z" fill="#bcd0e6"/><path d="M784.4 131.6L790.4 125.6M786.6 124.6H791.4V129.4" fill="none" stroke="#b9bec6" stroke-width="2.2"/>
<g transform="translate(832.4 116.2)"><path d="M0 1Q0 0 1 0H16.6Q17.6 0 17.6 1V17.3H0Z" fill="#5c7288"/><rect x="2.4640000000000004" y="0" width="12.672" height="7.958000000000001" fill="#74879a"/><rect x="3.5200000000000005" y="10.726" width="10.56" height="6.574000000000001" fill="#6c8297"/><rect x="5.28" y="12.11" width="2.9920000000000004" height="5.19" fill="#5c7288"/></g>
<text x="1052.4" y="121.2" font-family="Liberation Serif,DejaVu Serif,serif" font-weight="bold" font-size="12.4" fill="#89929b" textLength="26" lengthAdjust="spacingAndGlyphs">ABC</text><path d="M1060.6 130.4L1064.2 134.2C1066 130 1068.6 127 1072 124.4" fill="none" stroke="#17912e" stroke-width="2.3"/>
<path d="M1103.6 126L1112 133.6" stroke="#9a5a22" stroke-width="2.8" stroke-linecap="round"/><circle cx="1099" cy="121.4" r="5.9" fill="url(#gLens)" stroke="#d7dde5" stroke-width=".8"/>
<path d="M1142 113.4H1154L1160.2 119.6V134H1142Z" fill="url(#gDoc)"/><path d="M1154 113.4V119.6H1160.2Z" fill="#fafafa" stroke="#c2c2c2" stroke-width=".5"/><circle cx="1151.2" cy="126.2" r="6.8" fill="url(#gGlobe)"/><path d="M1148 121.4C1150 120.6 1152.4 121.4 1152.6 123C1152.2 124.4 1150.6 124.4 1149.8 125.8C1148.6 125.6 1147.4 124 1148 121.4ZM1152.6 127.6C1154.4 127.4 1155.8 128.4 1155.6 130C1155 131.4 1153.8 132 1152.8 131.4C1152.6 130 1151.8 128.8 1152.6 127.6Z" fill="#e3c15c"/><path d="M1134.2 118.2H1140.6V114.8L1147.4 120.8L1140.6 126.8V123.4H1134.2Z" fill="#d3a638" stroke="#a87a1e" stroke-width=".7" stroke-linejoin="round"/>
<path d="M1294.51 119.09L1295.07 116.40L1297.73 116.40L1298.29 119.09L1299.39 119.54L1301.68 118.04L1303.56 119.92L1302.06 122.21L1302.51 123.31L1305.20 123.87L1305.20 126.53L1302.51 127.09L1302.06 128.19L1303.56 130.48L1301.68 132.36L1299.39 130.86L1298.29 131.31L1297.73 134.00L1295.07 134.00L1294.51 131.31L1293.41 130.86L1291.12 132.36L1289.24 130.48L1290.74 128.19L1290.29 127.09L1287.60 126.53L1287.60 123.87L1290.29 123.31L1290.74 122.21L1289.24 119.92L1291.12 118.04L1293.41 119.54ZM1299.40 125.2A3.0 3.0 0 1 0 1293.40 125.2A3.0 3.0 0 1 0 1299.40 125.2Z" fill="#ececec" stroke="#ececec" stroke-width="1.3" stroke-linejoin="round" fill-rule="evenodd"/><path d="M1294.51 119.09L1295.07 116.40L1297.73 116.40L1298.29 119.09L1299.39 119.54L1301.68 118.04L1303.56 119.92L1302.06 122.21L1302.51 123.31L1305.20 123.87L1305.20 126.53L1302.51 127.09L1302.06 128.19L1303.56 130.48L1301.68 132.36L1299.39 130.86L1298.29 131.31L1297.73 134.00L1295.07 134.00L1294.51 131.31L1293.41 130.86L1291.12 132.36L1289.24 130.48L1290.74 128.19L1290.29 127.09L1287.60 126.53L1287.60 123.87L1290.29 123.31L1290.74 122.21L1289.24 119.92L1291.12 118.04L1293.41 119.54ZM1299.40 125.2A3.0 3.0 0 1 0 1293.40 125.2A3.0 3.0 0 1 0 1299.40 125.2Z" fill="#ececec" fill-rule="evenodd"/>
<rect x="2243" y="115.8" width="16.2" height="18" rx="2.4" fill="#5fab62"/><text x="2251.2" y="130.6" text-anchor="middle" font-family="DejaVu Sans,Liberation Sans,sans-serif" font-size="13.6" fill="#eef6ee">C</text><circle cx="2239.2" cy="118.6" r="5.9" fill="#f4f4f4"/><path d="M2235.2 117.4h2.8v-2.8h2.4v2.8h2.8v2.4h-2.8v2.8h-2.4v-2.8h-2.8z" fill="#1f9a2a"/>
<rect x="2285.4" y="115" width="16" height="17.6" rx="2.2" fill="#e9e9e9"/><rect x="2287.6" y="121.4" width="9.6" height="4.6" fill="#a9bfe6"/>
<path d="M2299.2 121.196H2305.6319999999996V117.6L2312.6 123.8L2305.6319999999996 130.0V126.404H2299.2Z" fill="#1f9d55"/>
<rect x="2375.2" y="115" width="16.4" height="17.6" rx="2.2" fill="#e9e9e9"/><path d="M2379.6 119.4L2382.6 116.6V118.6C2386.2 118.6 2387.6 121.6 2385.2 125.2C2385.8 122.6 2384.8 121.4 2382.6 121.4V123.6L2378 119.8Z" fill="#1c4fc4"/>
<path d="M2389 121.196H2395.528V117.6L2402.6 123.8L2395.528 130.0V126.404H2389Z" fill="#1f9d55"/>
<path d="M2420.976 133.8V124.024H2415.6L2424.0 115L2432.4 124.024H2427.024V133.8Z" fill="#ececec" />
<path d="M2456.7760000000003 116.2V125.224H2451.4L2459.8 135.0L2468.2000000000003 125.224H2462.824V116.2Z" fill="#ececec" />
<circle cx="2507.2" cy="124.4" r="3.7" fill="#1a86d2"/><path d="M2496.4 123.4H2500.2A7.4 7.4 0 0 1 2513.4 119.8M2518.2 125.4H2514.4A7.4 7.4 0 0 1 2501.2 129" fill="none" stroke="#1a86d2" stroke-width="3" stroke-linecap="round"/>
<path d="M2530.8 568L2534.5 563.6L2538.3 568Z" fill="#a29c96"/><path d="M2530.8 571.4L2534.5 575.6L2538.3 571.4Z" fill="#a29c96"/>
<path d="M882.1 605.1L890.6999999999999 613.6999999999999M890.6999999999999 605.1L882.1 613.6999999999999" stroke="#606a74" stroke-width="3.0" fill="none"/>
<path d="M1066.7 605.1L1075.3 613.6999999999999M1075.3 605.1L1066.7 613.6999999999999" stroke="#606a74" stroke-width="3.0" fill="none"/>
<g transform="translate(2485 605)"><path d="M0 17.9V10.8Q0 8.3 2.5 8.3H18.5Q21 8.3 21 10.8V17.9Z" fill="#8d98a2"/><rect x="1.9" y="13.3" width="17.2" height="3.2" fill="#2f3942"/><path d="M27 17.9V1.7Q27 -0.8 29.5 -0.8H45.5Q48 -0.8 48 1.7V17.9Z" fill="#8d98a2"/><rect x="28.9" y="4.3" width="17.3" height="12.2" fill="#2f3942"/></g>
<ellipse cx="722.8" cy="644.8" rx="13.1" ry="8.9" fill="url(#gRlogo)"/><ellipse cx="725" cy="644.2" rx="8" ry="5" fill="#4f5b66"/><text x="719.6" y="656.2" font-family="DejaVu Sans,Liberation Sans,sans-serif" font-weight="bold" font-size="20.6" fill="#2273e6" textLength="15.4" lengthAdjust="spacingAndGlyphs">R</text>
<path d="M1105.4 650.8C1106 645.4 1109 642.4 1113.6 642V637.2L1122.6 644.4L1113.6 651.6V646.8C1110.2 646.6 1107.6 647.6 1105.4 650.8Z" fill="#d4d6da"/>
<path d="M2538.4 632.8L2528.6 642.4" stroke="#c0c5cb" stroke-width="1.7" stroke-linecap="round"/><path d="M2526.2 642L2529.2 645.2C2528.6 648.6 2527.2 651.4 2525 653.8C2520.4 654.4 2516 653.4 2512 651.2C2517.6 649.4 2522.4 646.4 2526.2 642Z" fill="#b9bec4"/>
<g transform="translate(624 876)"><path d="M0 17.9V10.8Q0 8.3 2.5 8.3H18.5Q21 8.3 21 10.8V17.9Z" fill="#8d98a2"/><rect x="1.9" y="13.3" width="17.2" height="3.2" fill="#2f3942"/><path d="M27 17.9V1.7Q27 -0.8 29.5 -0.8H45.5Q48 -0.8 48 1.7V17.9Z" fill="#8d98a2"/><rect x="28.9" y="4.3" width="17.3" height="12.2" fill="#2f3942"/></g>
<path d="M105 981.8L112 972.2L119 981.8Z" fill="#8892a0"/>
<path d="M144.8 940.6L151.8 948.2L144.8 955.8000000000001" fill="none" stroke="#e6e8ea" stroke-width="2.3" stroke-linecap="round" stroke-linejoin="round"/>
<path d="M223.4 940.6L230.4 948.2L223.4 955.8000000000001" fill="none" stroke="#e6e8ea" stroke-width="2.3" stroke-linecap="round" stroke-linejoin="round"/>
<path d="M314.6 940.6L321.6 948.2L314.6 955.8000000000001" fill="none" stroke="#e6e8ea" stroke-width="2.3" stroke-linecap="round" stroke-linejoin="round"/>
<path d="M52.4 948L62.9 938L73.6 948V957.8H52.4Z" fill="#e4e6ec"/><rect x="52.4" y="956.6" width="21.2" height="1.3" fill="#aeb4be"/><rect x="60.2" y="947.8" width="5.7" height="8.8" fill="#a9743c"/><path d="M51.4 948.6L62.9 937.2L74.6 948.6" fill="none" stroke="#dd1c0c" stroke-width="2.7" stroke-linejoin="miter"/>
<g transform="translate(624 936.6) scale(1.0)" opacity="1.0"><path d="M10.95 0L21.9 2.3V17L10.95 21.8L0 17V2.3Z" fill="#9dd3ea" stroke="rgba(70,170,190,.55)" stroke-width=".6" stroke-linejoin="round"/><path d="M10.95 0L21.9 2.3L10.95 5.2L0 2.3Z" fill="rgba(255,255,255,.10)"/><path d="M10.95 0V21.8" fill="none" stroke="rgba(50,160,170,.75)" stroke-width=".9"/><path d="M0 17L10.95 14.1L21.9 17M0 2.3L10.95 5.2L21.9 2.3" fill="none" stroke="rgba(60,170,190,.45)" stroke-width=".7"/><text x="10.9" y="13.9" text-anchor="middle" font-family="Liberation Serif,DejaVu Serif,serif" font-size="15.6" fill="#2a5ca8" stroke="#2a5ca8" stroke-width=".3">R</text></g>
<ellipse cx="59.900000000000006" cy="916.0" rx="0.6" ry="10.0" fill="rgba(160,175,190,.28)"/><ellipse cx="58.7" cy="916.0" rx="0.85" ry="12.0" fill="#06090c"/>
<ellipse cx="119.8" cy="916.0" rx="0.6" ry="10.0" fill="rgba(160,175,190,.28)"/><ellipse cx="118.6" cy="916.0" rx="0.85" ry="12.0" fill="#06090c"/>
<ellipse cx="202.79999999999998" cy="916.0" rx="0.6" ry="10.0" fill="rgba(160,175,190,.28)"/><ellipse cx="201.6" cy="916.0" rx="0.85" ry="12.0" fill="#06090c"/>
<path d="M104.6 915.8h8.4l-4.2 4.4z" fill="#e4e4e4"/>
<path d="M248.6 915.8h8.4l-4.2 4.4z" fill="#e4e4e4"/>
<path d="M30 910.4Q30 907 33 907H44.6L49.4 910.6V925.6H30Z" fill="#d9d2b4"/><path d="M26.8 912.6H47.4Q49.4 912.6 49.4 914.6V925.8H26.8Z" fill="url(#gFold)" stroke="#b8982f" stroke-width=".6"/>
<circle cx="29.7" cy="914.0500000000001" r="7.6" fill="rgba(0,0,0,.22)"/><circle cx="29.4" cy="913.45" r="7.6" fill="#1aa67a"/><path d="M23.9 912.0500000000001h4.1v-4.1h2.8v4.1h4.1v2.8h-4.1v4.1h-2.8v-4.1h-4.1z" fill="#f1eff0"/>
<rect x="76.8" y="907.7" width="17.4" height="19.2" fill="url(#gDoc)" stroke="#c4c4c4" stroke-width=".5"/>
<circle cx="76.7" cy="914.0500000000001" r="7.6" fill="rgba(0,0,0,.22)"/><circle cx="76.4" cy="913.45" r="7.6" fill="#0f9b60"/><path d="M70.9 912.0500000000001h4.1v-4.1h2.8v4.1h4.1v2.8h-4.1v4.1h-2.8v-4.1h-4.1z" fill="#f1eff0"/>
<rect x="137" y="907.7" width="17.3" height="19.2" fill="url(#gDoc)" stroke="#c4c4c4" stroke-width=".5"/>
<circle cx="136.5" cy="913.95" r="7.6" fill="rgba(0,0,0,.25)"/><circle cx="136.5" cy="913.45" r="7.6" fill="#a11e1a"/><g transform="rotate(45 136.5 913.45)"><path d="M131.7 912.0h3.35v-3.35h2.9v3.35h3.35v2.9h-3.35v3.35h-2.9v-3.35h-3.35z" fill="#f1eff0"/></g>
<rect x="168.4" y="908" width="13.8" height="15.2" fill="#e9e9e9" transform="rotate(-2 175 915)"/><rect x="177.4" y="911" width="13.6" height="15.2" fill="#ededed" transform="rotate(3 184 918)"/>
<path d="M173.8 916.484H180.10000000000002V914L186.4 918.6L180.10000000000002 923.2V920.716H173.8Z" fill="#1a9fe0"/>
<path d="M223.78 909.83L224.46 906.82L227.54 906.82L228.22 909.83L229.50 910.37L232.11 908.71L234.29 910.89L232.63 913.50L233.17 914.78L236.18 915.46L236.18 918.54L233.17 919.22L232.63 920.50L234.29 923.11L232.11 925.29L229.50 923.63L228.22 924.17L227.54 927.18L224.46 927.18L223.78 924.17L222.50 923.63L219.89 925.29L217.71 923.11L219.37 920.50L218.83 919.22L215.82 918.54L215.82 915.46L218.83 914.78L219.37 913.50L217.71 910.89L219.89 908.71L222.50 910.37ZM229.30 917.0A3.3 3.3 0 1 0 222.70 917.0A3.3 3.3 0 1 0 229.30 917.0Z" fill="rgba(10,20,30,.35)" fill-rule="evenodd" stroke="rgba(10,20,30,.35)" stroke-width="1.3" stroke-linejoin="round"/>
<path d="M223.78 909.13L224.46 906.12L227.54 906.12L228.22 909.13L229.50 909.67L232.11 908.01L234.29 910.19L232.63 912.80L233.17 914.08L236.18 914.76L236.18 917.84L233.17 918.52L232.63 919.80L234.29 922.41L232.11 924.59L229.50 922.93L228.22 923.47L227.54 926.48L224.46 926.48L223.78 923.47L222.50 922.93L219.89 924.59L217.71 922.41L219.37 919.80L218.83 918.52L215.82 917.84L215.82 914.76L218.83 914.08L219.37 912.80L217.71 910.19L219.89 908.01L222.50 909.67ZM229.30 916.3A3.3 3.3 0 1 0 222.70 916.3A3.3 3.3 0 1 0 229.30 916.3Z" fill="#3a9cc6" stroke="#3a9cc6" stroke-width="1.3" stroke-linejoin="round" fill-rule="evenodd"/><path d="M223.78 909.13L224.46 906.12L227.54 906.12L228.22 909.13L229.50 909.67L232.11 908.01L234.29 910.19L232.63 912.80L233.17 914.08L236.18 914.76L236.18 917.84L233.17 918.52L232.63 919.80L234.29 922.41L232.11 924.59L229.50 922.93L228.22 923.47L227.54 926.48L224.46 926.48L223.78 923.47L222.50 922.93L219.89 924.59L217.71 922.41L219.37 919.80L218.83 918.52L215.82 917.84L215.82 914.76L218.83 914.08L219.37 912.80L217.71 910.19L219.89 908.01L222.50 909.67ZM229.30 916.3A3.3 3.3 0 1 0 222.70 916.3A3.3 3.3 0 1 0 229.30 916.3Z" fill="url(#gGear)" fill-rule="evenodd"/>
<path d="M675.04 919.60A8.3 8.3 0 1 1 672.15 908.01" fill="none" stroke="#c3cad6" stroke-width="5.2"/><path d="M677.30 904.50V914.00H668.10Z" fill="#c3cad6"/>
<path d="M69 1006.2L76.6 997.2L84.2 1006.2H79.4V1011.4H88.2V1016.6H73.8V1006.2Z" fill="#2db870" stroke="#1f9a5d" stroke-width=".5"/>
<path d="M70.6 1031.2H83.0L89.0 1037.2V1052.2H70.6Z" fill="url(#gDoc)" stroke="#bdbdbd" stroke-width=".4"/><path d="M83.0 1031.2V1037.2H89.0Z" fill="#f8f8f8" stroke="#b5b5b5" stroke-width=".6" stroke-linejoin="round"/>
<path d="M67.2 1041.4L74.4 1034.2L81.6 1041.4L74.4 1048.6000000000001Z" fill="#de4c36"/><path d="M72.4 1037.8L76.6 1042.0M74.4 1039.8V1044.6000000000001" stroke="#f6d8d2" stroke-width="1.1" fill="none"/>
<path d="M70.6 1065.2H83.0L89.0 1071.2V1086.2H70.6Z" fill="url(#gDoc)" stroke="#bdbdbd" stroke-width=".4"/><path d="M83.0 1065.2V1071.2H89.0Z" fill="#f8f8f8" stroke="#b5b5b5" stroke-width=".6" stroke-linejoin="round"/>
<g transform="translate(67.6 1100.0) scale(1.0)" opacity="1.0"><path d="M10.95 0L21.9 2.3V17L10.95 21.8L0 17V2.3Z" fill="#5a97b2" stroke="rgba(70,170,190,.55)" stroke-width=".6" stroke-linejoin="round"/><path d="M10.95 0L21.9 2.3L10.95 5.2L0 2.3Z" fill="rgba(255,255,255,.10)"/><path d="M10.95 0V21.8" fill="none" stroke="rgba(50,160,170,.75)" stroke-width=".9"/><path d="M0 17L10.95 14.1L21.9 17M0 2.3L10.95 5.2L21.9 2.3" fill="none" stroke="rgba(60,170,190,.45)" stroke-width=".7"/><text x="10.9" y="13.9" text-anchor="middle" font-family="Liberation Serif,DejaVu Serif,serif" font-size="15.6" fill="#2c66a4" stroke="#2c66a4" stroke-width=".3">R</text></g>
<path d="M70.6 1133.2H83.0L89.0 1139.2V1154.2H70.6Z" fill="url(#gDoc)" stroke="#bdbdbd" stroke-width=".4"/><path d="M83.0 1133.2V1139.2H89.0Z" fill="#f8f8f8" stroke="#b5b5b5" stroke-width=".6" stroke-linejoin="round"/>
<text x="66.0" y="1150.4" font-family="DejaVu Sans,Liberation Sans,sans-serif" font-size="10.4" letter-spacing="-0.6" fill="#7a1f8f" stroke="#7a1f8f" stroke-width=".25">MD</text>
</svg>
</div>
</body></html>
